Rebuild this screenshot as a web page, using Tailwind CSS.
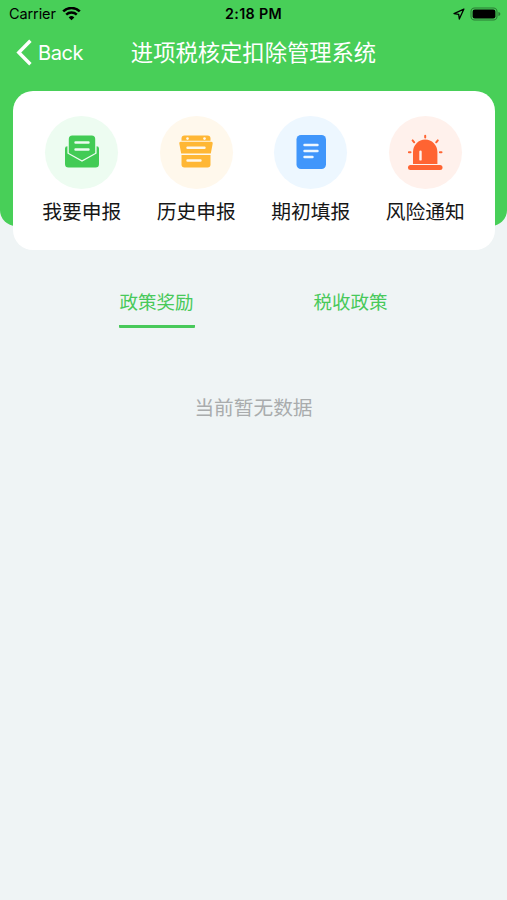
<!DOCTYPE html>
<html lang="zh-CN">
<head>
  <meta charset="UTF-8" />
  <meta name="viewport" content="width=device-width, initial-scale=1.0" />
  <title>进项税核定扣除管理系统</title>
  <script src="https://cdn.jsdelivr.net/npm/@tailwindcss/browser@4"></script>
</head>
<body class="bg-[#eff4f5] min-h-screen overflow-hidden font-[Inter,'Noto_Sans_CJK_SC',sans-serif]">

  <header class="h-[226px] bg-[#48cf58] rounded-b-2xl">
    <!-- status bar -->
    <div class="grid grid-cols-3 items-center h-7 pl-[9px] pr-[6px] text-black">
      <div class="flex items-center gap-[6px]">
        <span class="text-[14.5px] leading-none tracking-[-0.1px]">Carrier</span>
        <svg class="w-[19px] h-[14px]" viewBox="0 0 19 14" fill="none" stroke="currentColor">
          <path d="M1.2 4.4a12 12 0 0 1 16.6 0" stroke-width="2.6" />
          <path d="M4.2 7.7a7.6 7.6 0 0 1 10.6 0" stroke-width="2.4" />
          <path d="M9.5 13.3 6.7 10.4a4 4 0 0 1 5.6 0Z" fill="currentColor" stroke="none" />
        </svg>
      </div>
      <span class="pr-[3px] text-center text-[14.3px] font-semibold leading-none tracking-[0.3px]">2:18 PM</span>
      <div class="flex items-center justify-end gap-[5px]">
        <svg class="w-3 h-3" viewBox="0 0 12 12" fill="none" stroke="currentColor" stroke-width="1.3" stroke-linejoin="round">
          <path d="M10.9 1.1 1 5.6l4.7.7.6 4.7Z" />
        </svg>
        <svg class="w-[31px] h-[14px]" viewBox="0 0 31 14">
          <rect x="1" y="1" width="26" height="12" rx="3.6" fill="none" stroke="#000" stroke-opacity=".4" stroke-width="1.1" />
          <rect x="2.6" y="2.6" width="22.8" height="8.8" rx="2.2" />
          <path d="M28.4 5v4c1.2-.4 1.9-1.1 1.9-2s-.7-1.6-1.9-2Z" fill-opacity=".4" />
        </svg>
      </div>
    </div>

    <!-- nav bar -->
    <div class="grid grid-cols-[1fr_auto_1fr] items-center h-12 px-4 text-white">
      <div class="flex items-center gap-[6px]">
        <svg class="w-4 h-[27px]" viewBox="0 0 16 27" fill="none" stroke="currentColor" stroke-width="3.4">
          <path d="M14.4 1.8 2.8 13.5l11.6 11.7" />
        </svg>
        <span class="pt-px text-[20px] leading-none tracking-[-0.4px]">Back</span>
      </div>
      <h1 class="pt-[2px] text-[22.3px] leading-none whitespace-nowrap">进项税核定扣除管理系统</h1>
    </div>

    <!-- shortcuts -->
    <nav class="mt-[15px] ml-[13px] mr-[12px] h-[159px] pl-[11.5px] pr-[12.5px] pt-[24.5px] grid grid-cols-4 bg-white rounded-[20px] text-[19.8px] text-[#161616]">
      <a class="flex flex-col items-center">
        <span class="size-[73px] rounded-full bg-[#edfcf1] flex items-center justify-center">
          <svg class="size-9" viewBox="0 0 36 36" fill="#42cb55">
            <path d="M3.4 12.2A2.4 2.4 0 0 0 1 14.6V30a3.5 3.5 0 0 0 3.5 3.5h27A3.5 3.5 0 0 0 35 30V14.6a2.4 2.4 0 0 0-2.4-2.4v7.4L18 27.7 3.4 19.6Z" />
            <path d="M4.8 5a3.5 3.5 0 0 1 3.5-3.5h19.4A3.5 3.5 0 0 1 31.2 5v14L18 26.3 4.8 19Z" />
            <path d="M11.5 8.5h13M11.5 15.5h13" stroke="#edfcf1" stroke-width="2.4" stroke-linecap="round" />
          </svg>
        </span>
        <span class="mt-[12.5px] leading-[22px]">我要申报</span>
      </a>
      <a class="flex flex-col items-center">
        <span class="size-[73px] rounded-full bg-[#fff8ec] flex items-center justify-center">
          <svg class="size-9" viewBox="0 0 36 36" fill="#ffb735">
            <path d="M6.5 1.5h23a3 3 0 0 1 3 3v2.2h-29V4.5a3 3 0 0 1 3-3Z" />
            <path d="M2.8 7.8h30.4a1.5 1.5 0 0 1 1.5 1.8L32.8 19.5H3.2L1.3 9.6A1.5 1.5 0 0 1 2.8 7.8Z" />
            <path d="M3.5 21h29v9.5a3 3 0 0 1-3 3h-23a3 3 0 0 1-3-3Z" />
            <circle cx="9.5" cy="4.6" r="1.3" fill="#fff8ec" />
            <circle cx="26.5" cy="4.6" r="1.3" fill="#fff8ec" />
            <path d="M9.5 13.8h17M9.5 26.5h13" stroke="#fff8ec" stroke-width="2.4" stroke-linecap="round" />
          </svg>
        </span>
        <span class="mt-[12.5px] leading-[22px]">历史申报</span>
      </a>
      <a class="flex flex-col items-center">
        <span class="size-[73px] rounded-full bg-[#edf7ff] flex items-center justify-center">
          <svg class="size-9" viewBox="0 0 36 36">
            <rect x="3.5" y="1" width="29.5" height="34" rx="4.5" fill="#4096fb" />
            <path d="M11.5 11h13M11.5 17h13M11.5 23h8" stroke="#edf7ff" stroke-width="2.4" stroke-linecap="round" />
          </svg>
        </span>
        <span class="mt-[12.5px] leading-[22px]">期初填报</span>
      </a>
      <a class="flex flex-col items-center">
        <span class="size-[73px] rounded-full bg-[#fff1ec] flex items-center justify-center">
          <svg class="size-9" viewBox="0 0 36 36" fill="#ff6432">
            <path d="M6 30V17.8a12.2 12.2 0 0 1 24.4 0V30Z" />
            <rect x="1" y="31" width="34.5" height="5" rx="2.5" />
            <path d="M18.2 1.8v1.8M5.6 6.4l1.6 1.9M30.8 6.4l-1.6 1.9M1.9 18.3h1.6M32.9 18.3h1.6" stroke="#ff6432" stroke-width="2" stroke-linecap="round" />
            <path d="M13.5 17.8v7.6" stroke="#fff1ec" stroke-width="2.4" stroke-linecap="round" />
          </svg>
        </span>
        <span class="mt-[12.5px] leading-[22px]">风险通知</span>
      </a>
    </nav>
  </header>

  <main class="pt-[62px]">
    <div class="flex justify-center gap-[118px] text-[18.5px] leading-7 text-[#48c95a]">
      <button class="w-[76px] h-[40px] flex items-start justify-center border-b-3 border-[#48c95a] rounded-[1px]">政策奖励</button>
      <button class="w-[76px] h-[40px] flex items-start justify-center">税收政策</button>
    </div>
    <p class="mt-[66px] text-center text-[19.7px] leading-7 text-[#a9acad]">当前暂无数据</p>
  </main>

</body>
</html>
